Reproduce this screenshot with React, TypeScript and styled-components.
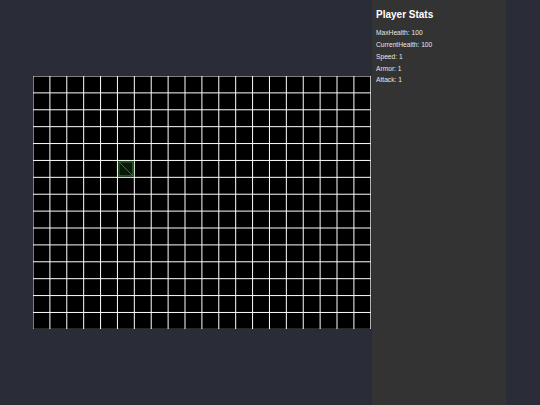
import React from "react";
import styled, { createGlobalStyle } from "styled-components";

const GlobalStyle = createGlobalStyle`
  html, body {
    margin: 0;
    padding: 0;
    background-color: #2a2d37;
    font-family: "Liberation Sans", Arial, sans-serif;
  }
`;

const COLS = 20;
const ROWS = 15;
const CELL = 40;
const BOARD_W = 337.8;
const BOARD_H = 253.35;
const LINE = (COLS * CELL) / BOARD_W;

const Layout = styled.div`
  display: flex;
  flex-direction: row;
  align-items: stretch;
  min-height: 405px;
`;

const GameArea = styled.div`
  width: 371px;
  box-sizing: border-box;
  padding: 76px 0 0 33px;
`;

const Board = styled.svg`
  display: block;
  background-color: #000;
`;

const Sidebar = styled.aside`
  width: 135px;
  box-sizing: border-box;
  min-height: 405px;
  padding: 9px 5px 0 4px;
  background-color: #333333;
  border-left: 1px solid #2c2c2c;
  color: #ffffff;
`;

const Title = styled.h2`
  margin: 0 0 6.3px 0;
  font-size: 10px;
  line-height: 12px;
  font-weight: bold;
`;

const Stat = styled.p`
  margin: 0;
  font-size: 6.67px;
  line-height: 11.75px;
  color: #e6e6e6;
`;

type Stats = {
  MaxHealth: number;
  CurrentHealth: number;
  Speed: number;
  Armor: number;
  Attack: number;
};

const player = { x: 5, y: 5 };

const stats: Stats = {
  MaxHealth: 100,
  CurrentHealth: 100,
  Speed: 1,
  Armor: 1,
  Attack: 1,
};

const GameBoard: React.FC = () => {
  const w = COLS * CELL;
  const h = ROWS * CELL;
  const px = player.x * CELL;
  const py = player.y * CELL;
  const inset = 3.5;

  return (
    <Board width={BOARD_W} height={BOARD_H} viewBox={`0 0 ${w} ${h}`}>
      {Array.from({ length: COLS + 1 }, (_, i) => (
        <line key={`v${i}`} x1={i * CELL} y1={0} x2={i * CELL} y2={h} stroke="#ffffff" strokeWidth={LINE} />
      ))}
      {Array.from({ length: ROWS + 1 }, (_, i) => (
        <line key={`h${i}`} x1={0} y1={i * CELL} x2={w} y2={i * CELL} stroke="#ffffff" strokeWidth={LINE} />
      ))}
      <rect
        x={px + inset}
        y={py + inset}
        width={CELL - inset * 2}
        height={CELL - inset * 2}
        fill="#061a06"
        stroke="#357a30"
        strokeWidth={LINE}
      />
      <line
        x1={px + inset}
        y1={py + inset}
        x2={px + CELL - inset}
        y2={py + CELL - inset}
        stroke="#357a30"
        strokeWidth={LINE}
      />
    </Board>
  );
};

const App: React.FC = () => {
  return (
    <>
      <GlobalStyle />
      <Layout>
        <GameArea>
          <GameBoard />
        </GameArea>
        <Sidebar>
          <Title>Player Stats</Title>
          {Object.entries(stats).map(([key, value]) => (
            <Stat key={key}>{`${key}: ${value}`}</Stat>
          ))}
        </Sidebar>
      </Layout>
    </>
  );
};

export default App;
